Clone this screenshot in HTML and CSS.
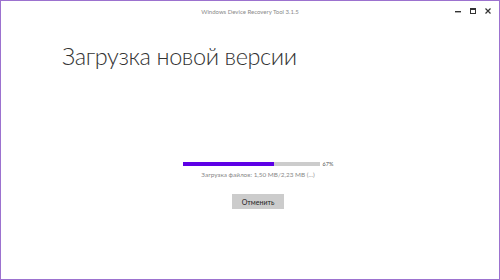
FILE: index.html
```html
<!DOCTYPE html>
<html lang="ru">
<head>
<meta charset="utf-8">
<title>Windows Device Recovery Tool</title>
<link rel="stylesheet" href="styles.css">
</head>
<body>
<div class="window">
  <div class="titlebar">
    <span class="title">Windows Device Recovery Tool 3.1.5</span>
    <div class="controls">
      <span class="ctl"><svg width="8" height="8" viewBox="0 0 8 8"><rect x="1" y="4" width="6" height="1.4" fill="#333"/></svg></span>
      <span class="ctl"><svg width="8" height="8" viewBox="0 0 8 8"><rect x="1.5" y="1.5" width="5" height="5" fill="none" stroke="#333" stroke-width="1"/><rect x="1.5" y="1.5" width="5" height="1.5" fill="#333"/></svg></span>
      <span class="ctl"><svg width="8" height="8" viewBox="0 0 8 8"><path d="M1.5 1.5 L6.5 6.5 M6.5 1.5 L1.5 6.5" stroke="#333" stroke-width="1.2"/></svg></span>
    </div>
  </div>
  <h1 class="heading">Загрузка новой версии</h1>
  <div class="progress-area">
    <div class="progress-row">
      <div class="bar"><div class="fill" style="width:67%"></div></div>
      <span class="pct">67%</span>
    </div>
    <div class="status">Загрузка файлов: 1,50 MB/2,23 MB (...)</div>
    <button class="cancel">Отменить</button>
  </div>
</div>
</body>
</html>
```
FILE: styles.css
```css
* { box-sizing: border-box; }
html, body { margin: 0; padding: 0; background: #fff; }
body { width: 500px; height: 280px; overflow: hidden; font-family: "Segoe UI", Lato, "Open Sans", sans-serif; }
.window {
  width: 500px; height: 280px;
  border: 1px solid #9c72cf;
  display: flex; flex-direction: column;
  background: #fff;
}
.titlebar {
  height: 20px; display: flex; align-items: center; justify-content: center;
  position: relative;
}
.title { font-size: 6px; color: #8a8a8a; margin-top: 1px; }
.controls {
  position: absolute; right: 4px; top: 5px;
  display: flex;
}
.ctl { width: 15px; height: 10px; display: flex; align-items: center; justify-content: center; }
.ctl svg { display: block; }
.heading {
  margin: 17px 0 0 61px;
  font-weight: 300; font-size: 23.5px; letter-spacing: -0.4px; color: #333; line-height: 36px;
}
.progress-area {
  margin-top: 87px; padding-left: 16px;
  display: flex; flex-direction: column; align-items: center;
}
.progress-row {
  display: flex; align-items: center; gap: 3px;
}
.bar { width: 137px; height: 4px; background: #cccccc; }
.fill { height: 100%; background: #5d00e6; }
.pct { font-size: 5.5px; color: #555; }
.status { font-size: 6.4px; color: #888; margin-top: 4px; }
.cancel {
  margin-top: 16px; width: 52px; height: 15px;
  background: #cccccc; border: none; padding: 0;
  font-family: inherit; font-size: 7px; color: #222;
}
```
